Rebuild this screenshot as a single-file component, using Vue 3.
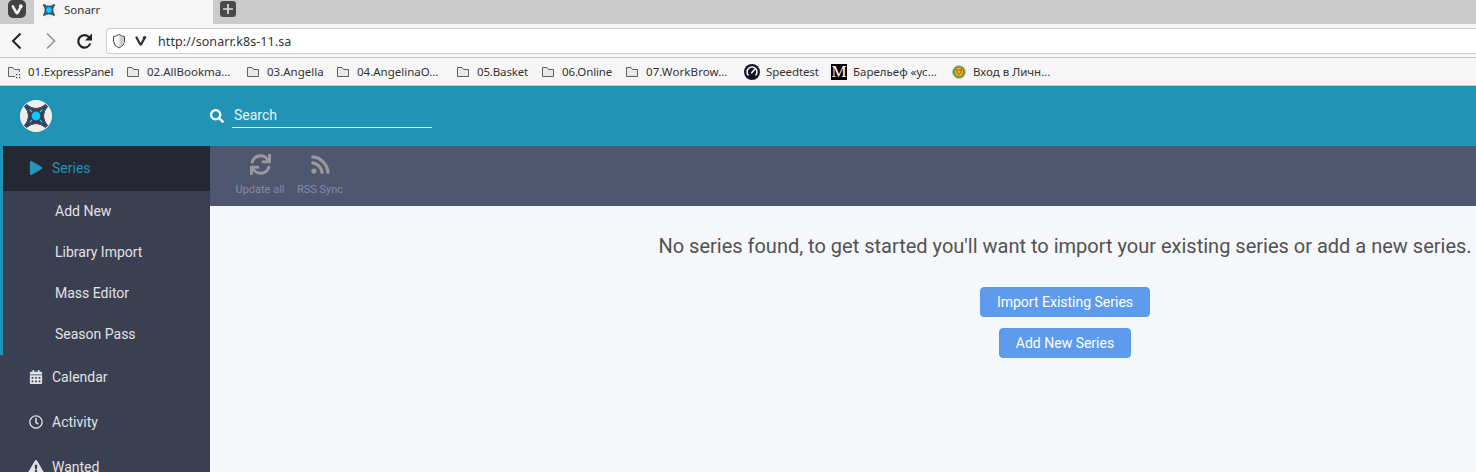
<script setup>
const bookmarks = [
  { label: '01.ExpressPanel', kind: 'speed-dial', slot: 's119' },
  { label: '02.AllBookma…', kind: 'folder', slot: 's120' },
  { label: '03.Angella', kind: 'folder', slot: 's90' },
  { label: '04.AngelinaO…', kind: 'folder', slot: 's120' },
  { label: '05.Basket', kind: 'folder', slot: 's85' },
  { label: '06.Online', kind: 'folder', slot: 's84' },
  { label: '07.WorkBrow…', kind: 'folder', slot: 's118' },
  { label: 'Speedtest', kind: 'gauge', slot: 's87' },
  { label: 'Барельеф «ус…', kind: 'museum', slot: 's120' },
  { label: 'Вход в Личн…', kind: 'badge', slot: 's120' },
]
const children = ['Add New', 'Library Import', 'Mass Editor', 'Season Pass']
const holes = [64, 192, 320].flatMap((x) => [256, 384].map((y) => ({ x, y })))
</script>

<template>
  <div class="window">
    <div class="tabs">
      <div class="menu">
        <svg width="18" height="18" viewBox="0 0 18 18">
          <rect width="18" height="18" rx="5" fill="#434343" />
          <path d="M4.8 6.3 L8.400 12.800 Q9 13.600 9.600 12.800 L13 6.500" fill="none" stroke="#f2f2f2" stroke-width="2.600" stroke-linecap="round" />
          <circle cx="12.800" cy="6.200" r="1.900" fill="#f2f2f2" />
        </svg>
      </div>
      <div class="tab">
        <svg width="16" height="16" viewBox="0 0 32 32">
          <circle cx="16" cy="16" r="16" fill="#eee" />
          <path d="M5 5 Q16 13 27 5 Q19 16 27 27 Q16 19 5 27 Q13 16 5 5Z" fill="#354a60" stroke="#354a60" stroke-width="3" />
          <path d="M6 6L26 26M26 6L6 26" stroke="#168bb5" stroke-width="1.500" />
          <circle cx="16" cy="16" r="5.800" fill="#0cf" />
        </svg>
        <span>Sonarr</span>
      </div>
      <div class="newtab">
        <svg width="16" height="16" viewBox="0 0 16 16">
          <rect width="16" height="16" rx="3" fill="#4a4a4a" />
          <path d="M8 3v10M3 8h10" stroke="#ddd" stroke-width="1.700" />
        </svg>
      </div>
    </div>

    <div class="address">
      <svg class="nav" width="100" height="32" viewBox="0 0 100 32" fill="none">
        <path d="M20.500 8.500L13 16l7.500 7.500" stroke="#222" stroke-width="2" />
        <path d="M47 8.500L54.500 16L47 23.500" stroke="#929292" stroke-width="1.600" />
        <path d="M89.300 12.500A6.200 6.200 0 1 0 90.300 18.500" stroke="#222" stroke-width="2.200" />
        <path d="M92 8.500V15.500H85Z" fill="#222" />
      </svg>
      <div class="url">
        <svg width="44" height="24" viewBox="0 0 44 24">
          <path d="M12 5.500Q9 7.500 6.500 7.500V12Q6.500 16.500 12 19Q17.500 16.500 17.500 12V7.500Q15 7.500 12 5.500Z" fill="#fff" stroke="#444" />
          <path d="M12.300 6.500Q14.500 8 17 8V12Q17 16 12.300 18.200Z" fill="#cfcfcf" />
          <path d="M29.500 8.500L33.200 15.200Q33.700 16 34.200 15.200L37.700 8.800" fill="none" stroke="#333" stroke-width="2.300" stroke-linecap="round" />
          <circle cx="37.500" cy="8.600" r="1.700" fill="#333" />
        </svg>
        <span>http://sonarr.k8s-11.sa</span>
      </div>
    </div>

    <div class="bookmarks">
      <div v-for="b in bookmarks" :key="b.label" class="bookmark" :class="[b.slot, b.kind]">
        <svg v-if="b.kind === 'folder' || b.kind === 'speed-dial'" width="14" height="14" viewBox="0 0 14 14">
          <path v-if="b.kind === 'folder'" d="M.5 11.500V2.500H5L6.500 4.500H11.500V11.500Z" fill="#e9e9e9" stroke="#616161" />
          <g v-else>
            <path d="M7 11.500H.5V2.500H5L6.500 4.500H11.500V7" fill="#e9e9e9" stroke="#616161" />
            <path d="M8 9h1.300v1.300H8zM11 9h1.300v1.300H11zM8 12h1.300v1.300H8zM11 12h1.300v1.300H11z" fill="#444" />
          </g>
        </svg>
        <svg v-else-if="b.kind === 'gauge'" width="16" height="16" viewBox="0 0 16 16">
          <circle cx="8" cy="8" r="8" fill="#141526" />
          <path d="M4.500 11.500A5 5 0 1 1 11.500 11.500" fill="none" stroke="#fff" stroke-width="1.500" />
          <path d="M7.300 9.200L10.800 5.300" stroke="#fff" stroke-width="1.500" />
        </svg>
        <span v-else-if="b.kind === 'museum'" class="mark">M</span>
        <svg v-else width="14" height="14" viewBox="0 0 14 14">
          <circle cx="7" cy="7" r="6.300" fill="#4c9a3f" stroke="#c8b07b" />
          <circle cx="7" cy="7" r="4.200" fill="#f0c419" />
          <path d="M4 4h6v3.500L7 10.800L4 7.500Z" fill="#df662b" />
          <circle cx="7" cy="6.800" r="1.500" fill="#eebb38" />
        </svg>
        <span class="label">{{ b.label }}</span>
      </div>
    </div>

    <header class="header">
      <svg class="logo" width="32" height="32" viewBox="0 0 32 32">
        <circle cx="16" cy="16" r="16" fill="#eee" />
        <path d="M6.500 4.500Q16 12.500 25.500 4.500L27.500 6.500Q19.500 16 27.500 25.500L25.500 27.500Q16 19.500 6.500 27.500L4.500 25.500Q12.500 16 4.500 6.500Z" fill="#3a3f51" stroke="#3a3f51" />
        <path d="M9.500 9.500L12 12M22.500 9.500L20 12M9.500 22.500L12 20M22.500 22.500L20 20" stroke="#0cf" stroke-width="1.200" />
        <path d="M4.500 6.500L8 10M27.500 6.500L24 10M4.500 25.500L8 22M27.500 25.500L24 22" stroke="#28627c" stroke-width=".8" />
        <circle cx="16" cy="16" r="4.400" fill="#0cf" />
      </svg>
      <svg class="glass" width="14" height="14" viewBox="0 0 512 512" fill="#fff"><path d="M505 442.700L405.300 343c-4.500-4.500-10.600-7-17-7H372c27.600-35.300 44-79.700 44-128C416 93.100 322.900 0 208 0S0 93.100 0 208s93.100 208 208 208c48.300 0 92.700-16.400 128-44v16.300c0 6.400 2.500 12.500 7 17l99.700 99.700c9.400 9.400 24.600 9.400 33.900 0l28.300-28.300c9.400-9.400 9.400-24.600.1-34zM208 336c-70.700 0-128-57.200-128-128 0-70.700 57.200-128 128-128 70.700 0 128 57.200 128 128 0 70.700-57.200 128-128 128z" /></svg>
      <div class="search">Search</div>
    </header>

    <div class="main">
      <aside class="sidebar">
        <div class="group">
          <div class="item active">
            <svg width="18" height="14" viewBox="-64 0 576 512"><path d="M424.400 214.700L72.400 6.600C43.800-10.300 0 6.100 0 47.900V464c0 37.500 40.700 60.100 72.400 41.300l352-208c31.400-18.500 31.500-64.100 0-82.600z" /></svg>
            <span>Series</span>
          </div>
          <div v-for="c in children" :key="c" class="child">{{ c }}</div>
        </div>
        <div class="item">
          <svg width="18" height="14" viewBox="-64 0 576 512">
            <path fill-rule="evenodd" d="M0 464c0 26.500 21.500 48 48 48h352c26.500 0 48-21.500 48-48V192H0zM400 64h-48V16c0-8.800-7.200-16-16-16h-32c-8.800 0-16 7.200-16 16v48H160V16c0-8.800-7.200-16-16-16h-32c-8.800 0-16 7.200-16 16v48H48C21.500 64 0 85.500 0 112v48h448v-48c0-26.500-21.500-48-48-48z" />
            <rect v-for="h in holes" :key="h.x + '-' + h.y" :x="h.x" :y="h.y" width="64" height="64" rx="12" fill="#3a3f51" />
          </svg>
          <span>Calendar</span>
        </div>
        <div class="item">
          <svg width="18" height="14" viewBox="-32 0 576 512"><path d="M256 8C119 8 8 119 8 256s111 248 248 248 248-111 248-248S393 8 256 8zm0 448c-110.500 0-200-89.500-200-200S145.500 56 256 56s200 89.500 200 200-89.500 200-200 200zm61.800-104.400l-84.900-61.700c-3.100-2.300-4.900-5.900-4.900-9.700V116c0-6.600 5.400-12 12-12h32c6.600 0 12 5.400 12 12v141.700l66.800 48.600c5.400 3.900 6.500 11.400 2.600 16.800L334.600 349c-3.900 5.300-11.400 6.500-16.800 2.600z" /></svg>
          <span>Activity</span>
        </div>
        <div class="item">
          <svg width="18" height="14" viewBox="0 0 576 512"><path d="M569.517 440.013C587.975 472.007 564.806 512 527.940 512H48.054c-36.937 0-59.999-40.055-41.577-71.987L246.423 23.985c18.467-32.009 64.720-31.951 83.154 0l239.940 416.028zM288 354c-25.405 0-46 20.595-46 46s20.595 46 46 46 46-20.595 46-46-20.595-46-46-46zm-43.673-165.346l7.418 136c.347 6.364 5.609 11.346 11.982 11.346h48.546c6.373 0 11.635-4.982 11.982-11.346l7.418-136c.375-6.874-5.098-12.654-11.982-12.654h-63.383c-6.884 0-12.356 5.780-11.981 12.654z" /></svg>
          <span>Wanted</span>
        </div>
      </aside>

      <section class="page">
        <div class="toolbar">
          <div class="tool">
            <svg width="21" height="21" viewBox="0 0 512 512"><path d="M440.650 12.570l4 82.770A247.160 247.160 0 0 0 255.830 8C134.730 8 33.910 94.920 12.290 209.820A12 12 0 0 0 24.090 224h49.050a12 12 0 0 0 11.670-9.260 175.910 175.910 0 0 1 317-56.940l-101.460-4.860a12 12 0 0 0-12.570 12v47.410a12 12 0 0 0 12 12H500a12 12 0 0 0 12-12V12a12 12 0 0 0-12-12h-47.370a12 12 0 0 0-11.980 12.570zM255.830 432a175.610 175.610 0 0 1-146-77.800l101.800 4.870a12 12 0 0 0 12.570-12v-47.400a12 12 0 0 0-12-12H12a12 12 0 0 0-12 12V500a12 12 0 0 0 12 12h47.350a12 12 0 0 0 12-12.600l-4.150-82.570A247.170 247.170 0 0 0 255.830 504c121.110 0 221.930-86.920 243.550-201.820a12 12 0 0 0-11.800-14.180h-49.050a12 12 0 0 0-11.670 9.260A175.860 175.860 0 0 1 255.830 432z" /></svg>
            <span>Update all</span>
          </div>
          <div class="tool">
            <svg width="21" height="21" viewBox="-32 0 512 512"><path d="M128.081 415.959c0 35.369-28.672 64.041-64.041 64.041S0 451.328 0 415.959s28.672-64.041 64.041-64.041 64.040 28.673 64.040 64.041zm175.660 47.250c-8.354-154.600-132.185-278.587-286.950-286.950C7.656 175.765 0 183.105 0 192.253v48.069c0 8.415 6.490 15.472 14.887 16.018 111.832 7.284 201.473 96.702 208.772 208.772.547 8.397 7.604 14.887 16.018 14.887h48.069c9.149.001 16.489-7.655 15.995-16.790zm144.249.288C439.596 229.677 251.465 40.445 16.503 32.010 7.473 31.686 0 38.981 0 48.016v48.068c0 8.625 6.835 15.645 15.453 15.999 191.179 7.839 344.627 161.316 352.465 352.465.353 8.618 7.373 15.453 15.999 15.453h48.068c9.034-.001 16.329-7.474 16.005-16.504z" /></svg>
            <span>RSS Sync</span>
          </div>
        </div>
        <div class="empty">
          <div class="message">No series found, to get started you'll want to import your existing series or add a new series.</div>
          <button>Import Existing Series</button>
          <button>Add New Series</button>
        </div>
      </section>
    </div>
  </div>
</template>

<style>
body { margin: 0; overflow: hidden; }
</style>

<style scoped>
* { box-sizing: border-box; }
svg { display: block; flex: none; }
.window { width: 1476px; height: 472px; overflow: hidden; display: flex; flex-direction: column; font-family: Roboto, "Liberation Sans", sans-serif; font-size: 14px; background: #f5f7fa; }
.tabs, .address, .bookmarks { font-family: "Noto Sans", "Open Sans", sans-serif; color: #333; white-space: nowrap; flex: none; }
.tabs { height: 24px; background: #cbcbcb; display: flex; font-size: 11.5px; }
.menu { width: 34px; padding-left: 8px; }
.tab { width: 179px; background: #f6f6f6; display: flex; align-items: center; gap: 7px; padding: 0 0 5px 7px; }
.newtab { padding: 1px 0 0 7px; }
.address { height: 34px; display: flex; align-items: center; background: #f6f6f6; border-bottom: 1px solid #cbcbcb; }
.nav { margin-right: 6px; }
.url { flex: 1; height: 26px; border: 1px solid #cbcbcb; border-right: 0; border-radius: 4px 0 0 4px; background: #fff; display: flex; align-items: center; gap: 7px; font-size: 12.5px; letter-spacing: 0.08px; }
.url span { padding-top: 1px; }
.bookmarks { height: 28px; display: flex; align-items: center; background: #f6f6f6; border-bottom: 1px solid #cbcbcb; padding-left: 8px; font-size: 11.5px; }
.bookmark { display: flex; align-items: center; gap: 6px; flex: none; }
.speed-dial { letter-spacing: -0.17px; }
.s119 { width: 119px; }
.s120 { width: 120px; }
.s90 { width: 90px; }
.s85 { width: 85px; letter-spacing: -0.15px; }
.s84 { width: 84px; letter-spacing: -0.12px; }
.s118 { width: 118px; letter-spacing: 0.1px; }
.s87 { width: 87px; letter-spacing: -0.1px; }
.mark { width: 16px; height: 16px; background: #000; color: #fff; font: 17px/16px "Liberation Serif", serif; letter-spacing: 0; text-align: center; }
.badge { gap: 7px; padding-left: 1px; }
.header { height: 60px; flex: none; background: #2193b5; display: flex; align-items: center; padding-left: 20px; color: #fff; }
.glass { margin: 0 8px 0 158px; }
.search { width: 200px; height: 25px; margin-bottom: 2px; border-bottom: 1px solid #fff; color: #e2f3f7; line-height: 24px; padding-left: 2px; }
.main { display: flex; flex: 1; min-height: 0; }
.sidebar { width: 210px; flex: none; background: #3a3f51; color: #e1e2e3; fill: #e1e2e3; }
.group { border-left: 3px solid #2193b5; }
.item { height: 45px; display: flex; align-items: center; gap: 7px; padding: 0 0 1px 27px; }
.active { background: #252833; color: #2193b5; fill: #2193b5; padding-left: 24px; }
.child { height: 41px; line-height: 41px; padding-left: 52px; }
.page { flex: 1; min-width: 0; overflow: hidden; }
.toolbar { height: 60px; background: #4f566f; display: flex; padding-left: 20px; }
.tool { width: 60px; display: flex; flex-direction: column; align-items: center; padding-top: 8px; fill: #999; color: #828ba5; font-size: 11px; white-space: nowrap; }
.tool span { margin-top: 8px; line-height: 14px; }
.empty { width: 1710px; height: 266px; background: #f5f7fa; display: flex; flex-direction: column; align-items: center; padding-top: 26px; }
.message { font-size: 20px; line-height: 28px; color: #515253; margin-bottom: 27px; white-space: nowrap; }
button { height: 30px; padding: 0 16px; margin-bottom: 11px; border: 1px solid #5899eb; border-radius: 4px; background: #5d9cec; color: #fff; font: 14px Roboto, sans-serif; }
</style>
